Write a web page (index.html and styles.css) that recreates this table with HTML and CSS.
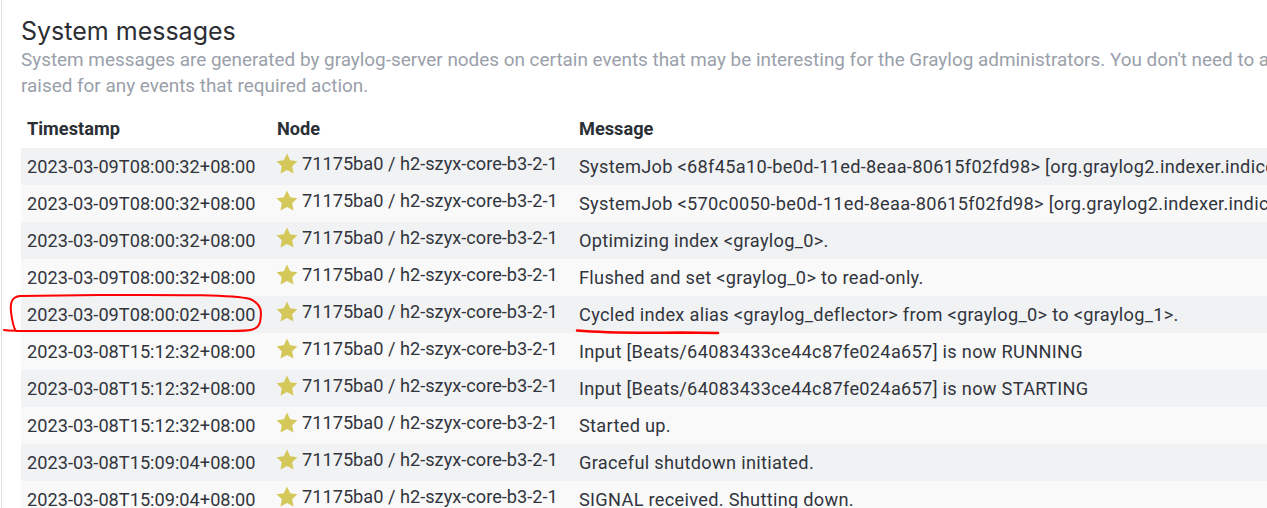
FILE: index.html
```html
<!DOCTYPE html>
<html>
<head>
<meta charset="utf-8">
<link rel="stylesheet" href="styles.css">
</head>
<body>
<div class="page">
  <div class="panel">
    <h2 class="title">System messages</h2>
    <p class="desc">System messages are generated by graylog-server nodes on certain events that may be interesting for the Graylog administrators. You don't need to actively act upon any message, but could review them from time to time to make sure that no error was<br>raised for any events that required action.</p>
    <table class="msgs">
      <colgroup><col class="c-ts"><col class="c-node"><col class="c-msg"></colgroup>
      <thead>
        <tr><th>Timestamp</th><th>Node</th><th>Message</th></tr>
      </thead>
      <tbody>
        <tr><td>2023-03-09T08:00:32+08:00</td><td><span class="node"><svg class="star" viewBox="0 0 24 24"><path d="M12 1.6l3.2 6.6 7.2 1-5.2 5.1 1.3 7.2L12 18.1l-6.5 3.4 1.3-7.2L1.6 9.2l7.2-1z"/></svg>71175ba0 / h2-szyx-core-b3-2-1</span></td><td class="msg">SystemJob &lt;68f45a10-be0d-11ed-8eaa-80615f02fd98&gt; [org.graylog2.indexer.indices.jobs.OptimizeIndexJob] finished in 10ms.</td></tr>
        <tr><td>2023-03-09T08:00:32+08:00</td><td><span class="node"><svg class="star" viewBox="0 0 24 24"><path d="M12 1.6l3.2 6.6 7.2 1-5.2 5.1 1.3 7.2L12 18.1l-6.5 3.4 1.3-7.2L1.6 9.2l7.2-1z"/></svg>71175ba0 / h2-szyx-core-b3-2-1</span></td><td class="msg">SystemJob &lt;570c0050-be0d-11ed-8eaa-80615f02fd98&gt; [org.graylog2.indexer.indices.jobs.SetIndexReadOnlyAndCalculateRangeJob] started.</td></tr>
        <tr><td>2023-03-09T08:00:32+08:00</td><td><span class="node"><svg class="star" viewBox="0 0 24 24"><path d="M12 1.6l3.2 6.6 7.2 1-5.2 5.1 1.3 7.2L12 18.1l-6.5 3.4 1.3-7.2L1.6 9.2l7.2-1z"/></svg>71175ba0 / h2-szyx-core-b3-2-1</span></td><td class="msg">Optimizing index &lt;graylog_0&gt;.</td></tr>
        <tr><td>2023-03-09T08:00:32+08:00</td><td><span class="node"><svg class="star" viewBox="0 0 24 24"><path d="M12 1.6l3.2 6.6 7.2 1-5.2 5.1 1.3 7.2L12 18.1l-6.5 3.4 1.3-7.2L1.6 9.2l7.2-1z"/></svg>71175ba0 / h2-szyx-core-b3-2-1</span></td><td class="msg">Flushed and set &lt;graylog_0&gt; to read-only.</td></tr>
        <tr><td>2023-03-09T08:00:02+08:00</td><td><span class="node"><svg class="star" viewBox="0 0 24 24"><path d="M12 1.6l3.2 6.6 7.2 1-5.2 5.1 1.3 7.2L12 18.1l-6.5 3.4 1.3-7.2L1.6 9.2l7.2-1z"/></svg>71175ba0 / h2-szyx-core-b3-2-1</span></td><td class="msg">Cycled index alias &lt;graylog_deflector&gt; from &lt;graylog_0&gt; to &lt;graylog_1&gt;.</td></tr>
        <tr><td>2023-03-08T15:12:32+08:00</td><td><span class="node"><svg class="star" viewBox="0 0 24 24"><path d="M12 1.6l3.2 6.6 7.2 1-5.2 5.1 1.3 7.2L12 18.1l-6.5 3.4 1.3-7.2L1.6 9.2l7.2-1z"/></svg>71175ba0 / h2-szyx-core-b3-2-1</span></td><td class="msg">Input [Beats/64083433ce44c87fe024a657] is now RUNNING</td></tr>
        <tr><td>2023-03-08T15:12:32+08:00</td><td><span class="node"><svg class="star" viewBox="0 0 24 24"><path d="M12 1.6l3.2 6.6 7.2 1-5.2 5.1 1.3 7.2L12 18.1l-6.5 3.4 1.3-7.2L1.6 9.2l7.2-1z"/></svg>71175ba0 / h2-szyx-core-b3-2-1</span></td><td class="msg">Input [Beats/64083433ce44c87fe024a657] is now STARTING</td></tr>
        <tr><td>2023-03-08T15:12:32+08:00</td><td><span class="node"><svg class="star" viewBox="0 0 24 24"><path d="M12 1.6l3.2 6.6 7.2 1-5.2 5.1 1.3 7.2L12 18.1l-6.5 3.4 1.3-7.2L1.6 9.2l7.2-1z"/></svg>71175ba0 / h2-szyx-core-b3-2-1</span></td><td class="msg">Started up.</td></tr>
        <tr><td>2023-03-08T15:09:04+08:00</td><td><span class="node"><svg class="star" viewBox="0 0 24 24"><path d="M12 1.6l3.2 6.6 7.2 1-5.2 5.1 1.3 7.2L12 18.1l-6.5 3.4 1.3-7.2L1.6 9.2l7.2-1z"/></svg>71175ba0 / h2-szyx-core-b3-2-1</span></td><td class="msg">Graceful shutdown initiated.</td></tr>
        <tr><td>2023-03-08T15:09:04+08:00</td><td><span class="node"><svg class="star" viewBox="0 0 24 24"><path d="M12 1.6l3.2 6.6 7.2 1-5.2 5.1 1.3 7.2L12 18.1l-6.5 3.4 1.3-7.2L1.6 9.2l7.2-1z"/></svg>71175ba0 / h2-szyx-core-b3-2-1</span></td><td class="msg">SIGNAL received. Shutting down.</td></tr>
      </tbody>
    </table>
  </div>
  <svg class="marks" width="1267" height="508" viewBox="0 0 1267 508">
    <path class="mark" d="M4 330 C10 331 20 331 40 331 L230 331 C252 331 258 330 260 322 C262 312 262 304 250 299 C230 294 160 295 100 295 L20 296 C12 297 10 302 11 312 C12 320 13 327 16 331"/>
    <path class="mark thick" d="M577 330.5 C600 332.5 640 333 680 332.5 L718 333"/>
  </svg>
</div>
</body>
</html>
```

FILE: styles.css
```css
html, body {
  margin: 0;
  padding: 0;
  background: #ffffff;
  overflow: hidden;
}

.page {
  position: relative;
  width: 1267px;
  height: 508px;
  overflow: hidden;
  padding-left: 1px;
  box-sizing: border-box;
}

.panel {
  border-left: 1px solid #dde1e7;
  padding: 15px 0 0 19px;
  width: 1800px;
  height: 600px;
  font-family: Roboto, "Liberation Sans", sans-serif;
  color: #31353c;
}

.title {
  margin: 0;
  font-family: Inter, "Noto Sans", sans-serif;
  font-weight: 400;
  font-size: 25px;
  line-height: 32px;
  color: #2b2e33;
}

.desc {
  margin: 0;
  font-size: 18.9px;
  line-height: 25.5px;
  color: #9aa0aa;
  white-space: nowrap;
}

.msgs {
  margin-top: 14px;
  border-collapse: collapse;
  table-layout: fixed;
  width: 1700px;
  font-size: 18.2px;
}

.c-ts { width: 250px; }
.c-node { width: 302px; }

.msgs th {
  text-align: left;
  font-weight: 700;
  padding: 6px 6px 8px;
  vertical-align: top;
  line-height: 22px;
  color: #2b2f36;
}

.msgs td {
  height: 37px;
  padding: 0 6px;
  line-height: 25px;
  white-space: nowrap;
  overflow: hidden;
  vertical-align: middle;
}

.msgs td.msg { letter-spacing: 0.3px; }

.msgs tbody tr:nth-child(odd) td { background: #f1f2f4; }
.msgs tbody tr:nth-child(even) td { background: #f9f9fa; }

.node {
  display: inline-flex;
  align-items: center;
  gap: 3px;
}

.star {
  width: 24px;
  height: 24px;
  margin-left: -2px;
  fill: #d4c85b;
  flex: none;
}

.marks {
  position: absolute;
  left: 0;
  top: 0;
  pointer-events: none;
}

.mark {
  fill: none;
  stroke: #ff0000;
  stroke-width: 2;
  stroke-linecap: round;
  stroke-linejoin: round;
}

.mark.thick { stroke-width: 2.5; }
```
